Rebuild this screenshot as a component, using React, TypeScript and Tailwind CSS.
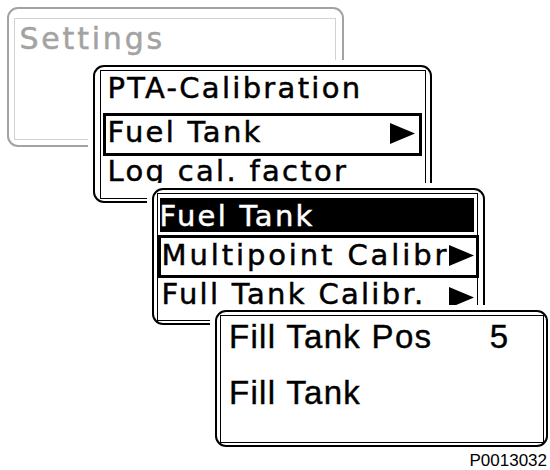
import React from 'react';

const lcd = "font-['DejaVu_Sans',sans-serif] text-[29px] leading-[29px] tracking-[2.3px] whitespace-nowrap [-webkit-text-stroke:0.5px_currentColor]";
const plain = "font-['Liberation_Sans',Arial,sans-serif] text-[33px] leading-[33px] tracking-[1.3px] whitespace-nowrap [-webkit-text-stroke:0.4px_currentColor]";

function Arrow() {
  return (
    <svg width="25" height="21" viewBox="0 0 25 21" className="shrink-0">
      <polygon points="0,0 25,10.5 0,21" fill="#000" />
    </svg>
  );
}

export default function App() {
  return (
    <div className="relative w-[550px] h-[470px] bg-white overflow-hidden text-black">
      {/* Settings (greyed, background) */}
      <div className="absolute left-[7px] top-[7px] w-[337px] h-[140px] rounded-[11px] border-[2.5px] border-[#a3a3a3] bg-white pl-[4.5px] pt-[8.5px] pr-[6.5px] pb-[5px]">
        <div className="h-full border border-[#d2d2d2] pl-[5px] pt-[5.5px]">
          <div className={lcd + ' text-[30px] leading-[30px] tracking-[2.8px] text-[#a3a3a3]'}>Settings</div>
        </div>
      </div>

      {/* Settings sub menu */}
      <div className="absolute left-[93px] top-[65px] w-[339px] h-[138px] rounded-[11px] border-[2.5px] border-black bg-white shadow-[0_0_0_5px_#fff] pl-[4.5px] pt-[2.5px] pr-[4.5px] pb-[2px]">
        <div className="h-full border border-black p-[1px] flex flex-col">
          <div className={lcd + ' h-[41px] pt-[2.5px] pl-[6px]'}>PTA-Calibration</div>
          <div className={lcd + ' h-[43px] ml-[1px] mr-[2px] border-[3px] border-black flex justify-between items-start pt-[2.5px] pl-[2px] pr-[4px]'}>
            <span>Fuel Tank</span>
            <span className="pt-[5px]"><Arrow /></span>
          </div>
          <div className="h-[27px] overflow-hidden">
            <div className={lcd + ' pt-[1px] pl-[6px]'}>Log cal. factor</div>
          </div>
        </div>
      </div>

      {/* Fuel Tank menu */}
      <div className="absolute left-[152px] top-[188px] w-[333px] h-[137px] rounded-[11px] border-[2.5px] border-black bg-white shadow-[0_0_0_5px_#fff] pl-[2.5px] pt-[2.5px] pr-[5px] pb-[2.5px]">
        <div className="h-full border border-black flex flex-col">
          <div className={lcd + ' h-[34px] mt-[4px] ml-[2px] mr-[3px] bg-black text-white pt-[4.5px]'}>Fuel Tank</div>
          <div className={lcd + ' h-[43px] mt-[3px] -mr-[2px] border-[3px] border-black flex justify-between items-start pt-[3.5px] pl-[1px] pr-[2px]'}>
            <span className="tracking-[2.9px]">Multipoint Calibr</span>
            <span className="pt-[4px]"><Arrow /></span>
          </div>
          <div className={lcd + ' flex justify-between items-start pt-[2px] pl-[4px] pr-[3px]'}>
            <span>Full Tank Calibr.</span>
            <span className="pt-[7px]"><Arrow /></span>
          </div>
        </div>
      </div>

      {/* Fill Tank dialog */}
      <div className="absolute left-[215px] top-[310px] w-[333px] h-[137px] rounded-[11px] border-[2.5px] border-black bg-white shadow-[0_0_0_5px_#fff] p-[2.5px]">
        <div className="h-full border border-black pt-[4px] pl-[8.5px] pr-[33px]">
          <div className={plain + ' flex justify-between'}>
            <span>Fill Tank Pos</span>
            <span>5</span>
          </div>
          <div className={plain + ' mt-[23px]'}>Fill Tank</div>
        </div>
      </div>

      <div className="absolute right-[3px] top-[452px] font-['Liberation_Sans',Arial,sans-serif] text-[17px] leading-[17px]">
        P0013032
      </div>
    </div>
  );
}
